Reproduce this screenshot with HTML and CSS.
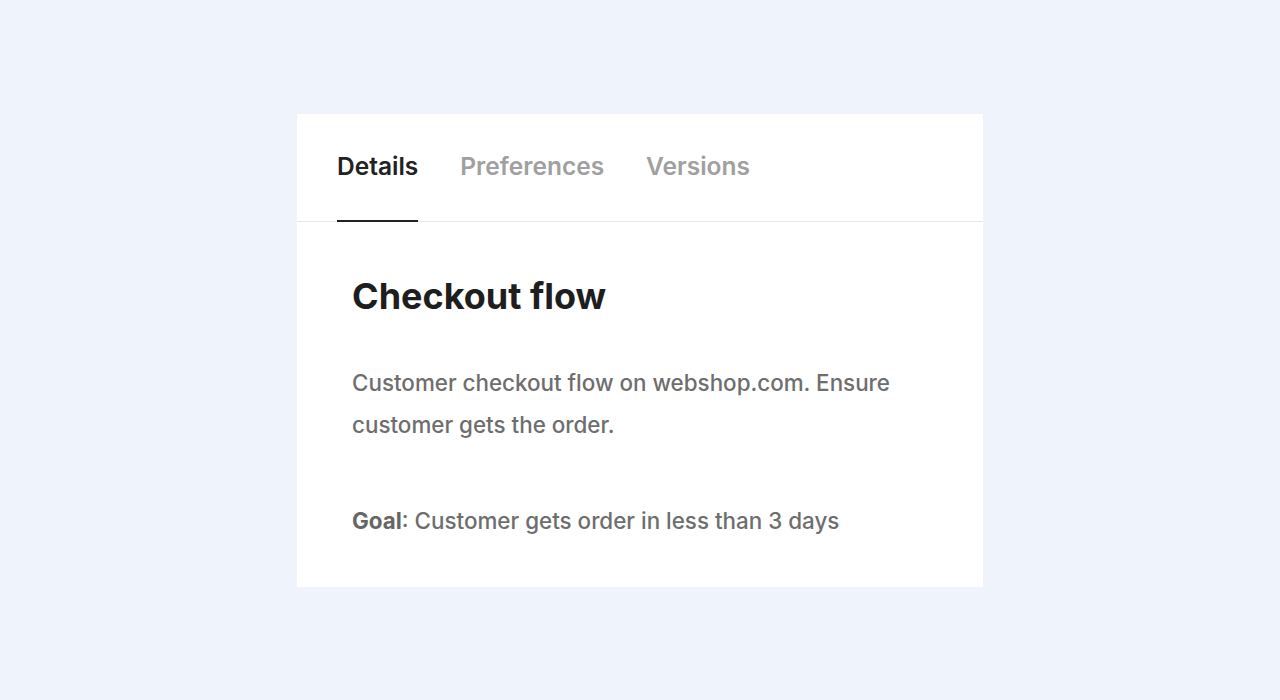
FILE: index.html
```html
<!DOCTYPE html>
<html lang="en">
<head>
<meta charset="utf-8">
<title>Checkout flow</title>
<link rel="stylesheet" href="styles.css">
</head>
<body>
<main class="page">
  <section class="card">
    <nav class="tabs">
      <a class="tab active">Details</a>
      <a class="tab">Preferences</a>
      <a class="tab">Versions</a>
    </nav>
    <div class="content">
      <h1 class="title">Checkout flow</h1>
      <p class="desc">Customer checkout flow on webshop.com. Ensure customer gets the order.</p>
      <p class="goal"><strong>Goal</strong>: Customer gets order in less than 3 days</p>
    </div>
  </section>
</main>
</body>
</html>
```
FILE: styles.css
```css
* { box-sizing: border-box; }
html, body { margin: 0; padding: 0; }
body {
  background: #eff3fb;
  font-family: Inter, "Noto Sans", sans-serif;
  width: 1280px;
  height: 700px;
  overflow: hidden;
}
.page {
  padding-top: 114px;
  padding-left: 297px;
}
.card {
  width: 686px;
  height: 473px;
  background: #ffffff;
}
.tabs {
  display: flex;
  gap: 42px;
  padding: 0 40px;
  border-bottom: 1px solid #e6e6e6;
  height: 108px;
}
.tab {
  font-family: Inter, sans-serif;
  font-size: 24.5px;
  font-weight: 600;
  color: #a0a0a0;
  padding-top: 37px;
  border-bottom: 2px solid transparent;
  margin-bottom: -1px;
}
.tab.active {
  color: #222222;
  border-bottom-color: #222222;
}
.content {
  padding: 52px 55px 0 55px;
}
.title {
  margin: 0;
  font-family: Inter, sans-serif;
  font-size: 36px;
  font-weight: 700;
  color: #1e1e1e;
  line-height: 44px;
}
.desc {
  margin: 44px 0 0 0;
  font-size: 22.4px;
  font-weight: 500;
  line-height: 42px;
  color: #6e6e6e;
  width: 570px;
}
.goal {
  margin: 54px 0 0 0;
  font-size: 22.4px;
  font-weight: 500;
  line-height: 42px;
  color: #6e6e6e;
}
.goal strong { font-weight: 700; color: #666666; }
```
